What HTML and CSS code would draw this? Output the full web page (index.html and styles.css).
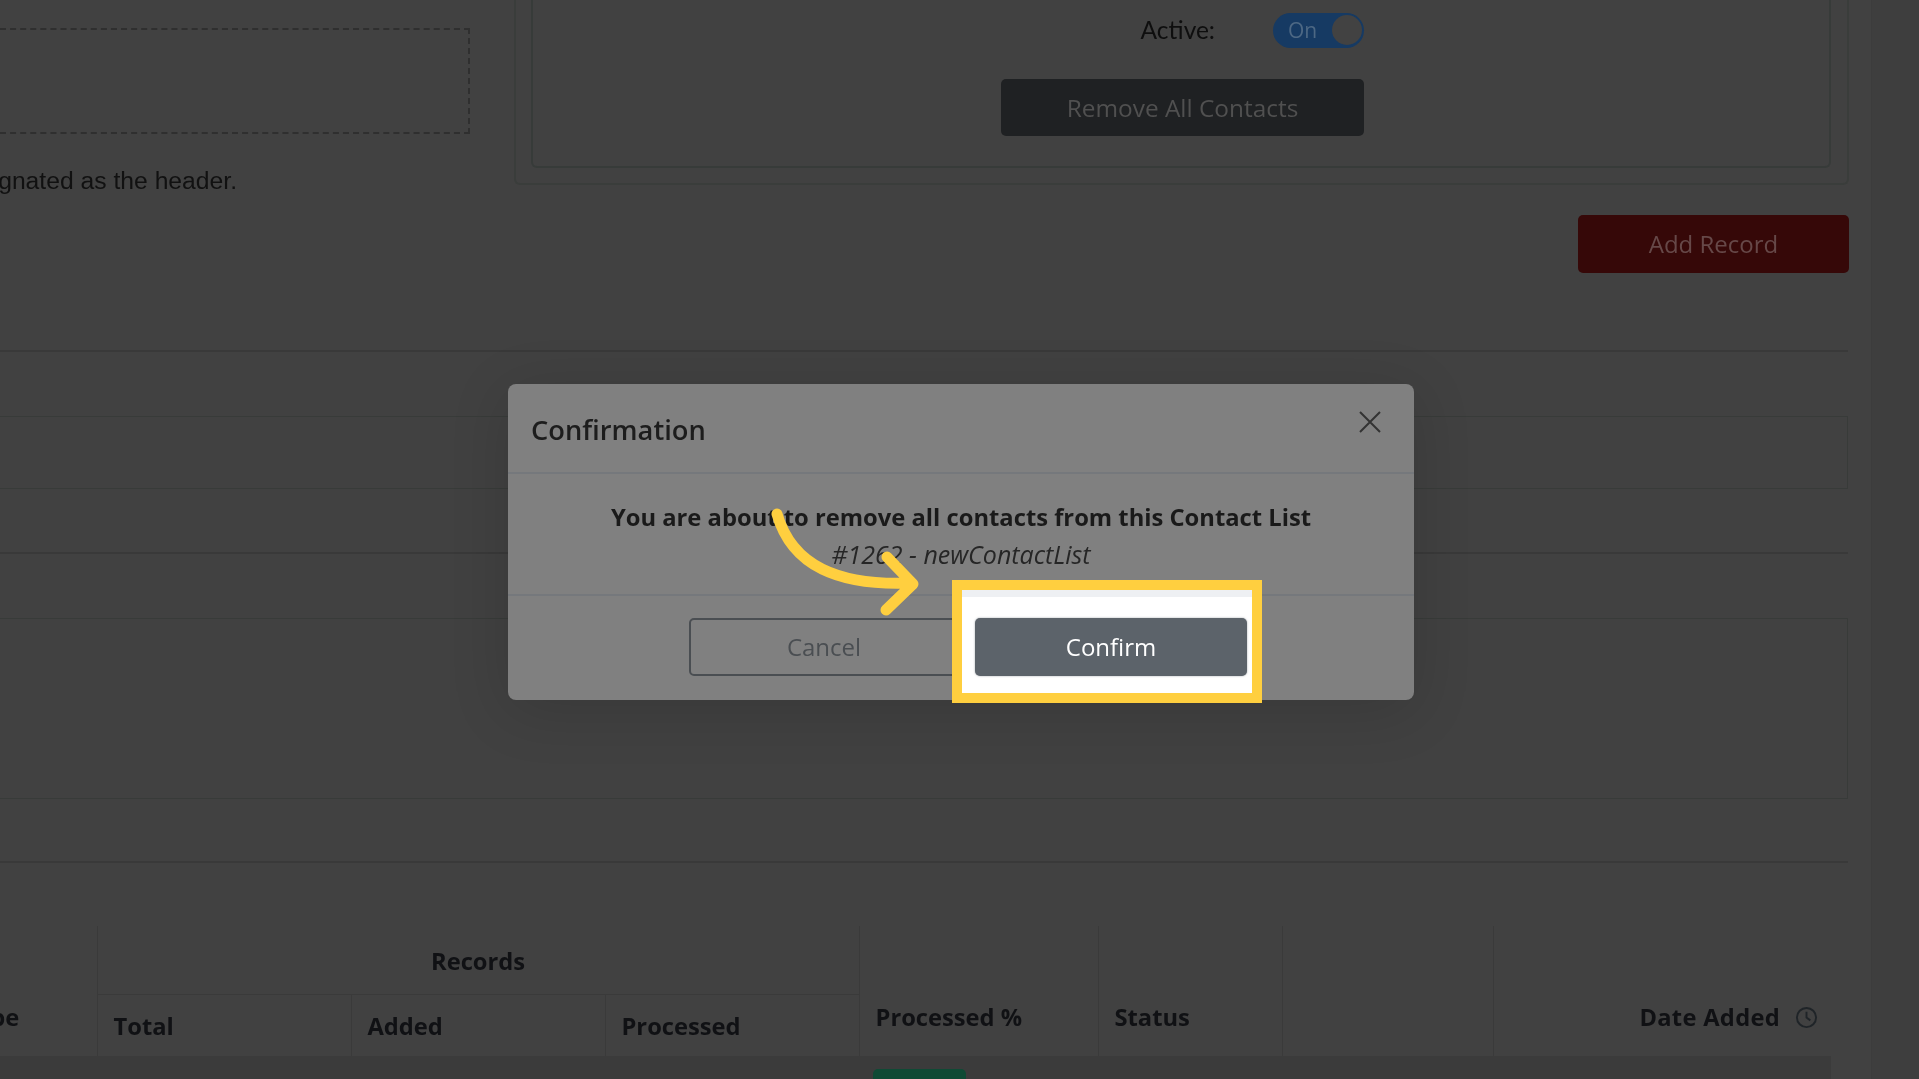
FILE: index.html
```html
<!DOCTYPE html>
<html lang="en">
<head>
<meta charset="utf-8">
<title>Contact List</title>
<link rel="stylesheet" href="styles.css">
</head>
<body>
<div class="shell">
  <main class="page">
    <section class="top-row">
      <div class="upload">
        <div class="dropzone"></div>
        <div class="note"><span>The first row will be designated as the header.</span></div>
      </div>
      <div class="outer-card">
        <div class="inner-card">
          <div class="controls">
            <div class="active-row">
              <span class="active-label">Active:</span>
              <span class="toggle"><span class="toggle-text">On</span><span class="knob"></span></span>
            </div>
            <button class="btn-remove">Remove All Contacts</button>
          </div>
        </div>
      </div>
    </section>
    <div class="actions"><button class="btn-add">Add Record</button></div>
    <hr class="rule rule-first">
    <div class="box box-short"></div>
    <hr class="rule rule-mid">
    <div class="box box-tall"></div>
    <hr class="rule rule-last">
    <table class="records">
      <colgroup>
        <col class="c-type"><col class="c-num"><col class="c-num"><col class="c-num">
        <col class="c-pct"><col class="c-status"><col class="c-blank"><col class="c-date">
      </colgroup>
      <thead>
        <tr class="head-one">
          <th rowspan="2" class="mid type">Type</th>
          <th colspan="3" class="center">Records</th>
          <th rowspan="2" class="mid">Processed %</th>
          <th rowspan="2" class="mid">Status</th>
          <th rowspan="2" class="mid"></th>
          <th rowspan="2" class="mid date"><span class="date-wrap"><span class="date-text">Date Added</span>
            <svg class="clock" viewBox="0 0 24 24" width="24" height="24" aria-hidden="true"><circle cx="12" cy="12" r="10"/><path d="M12 6v6l4 3"/></svg></span></th>
        </tr>
        <tr class="head-two"><th>Total</th><th>Added</th><th>Processed</th></tr>
      </thead>
      <tbody>
        <tr class="body-row">
          <td></td><td></td><td></td><td></td>
          <td><span class="badge"></span></td><td></td><td></td><td></td>
        </tr>
      </tbody>
    </table>
  </main>
  <div class="scrollbar"></div>
</div>

<div class="modal" role="dialog">
  <header class="modal-head">
    <h2>Confirmation</h2>
    <svg class="close" viewBox="0 0 24 24" width="24" height="24" aria-hidden="true"><path d="M2 2l20 20M22 2L2 22"/></svg>
  </header>
  <div class="modal-body">
    <p class="msg">You are about to remove all contacts from this Contact List</p>
    <p class="sub">#1262 - newContactList</p>
  </div>
  <footer class="modal-foot">
    <button class="btn-cancel">Cancel</button>
  </footer>
</div>

<div class="highlight">
  <div class="highlight-strip"></div>
  <button class="btn-confirm">Confirm</button>
</div>

<svg class="arrow" viewBox="0 0 1919 1079" width="1919" height="1079" aria-hidden="true">
  <path d="M777 514C792 566 838 586 911 583M887 557L913 584L886 610"/>
</svg>
</body>
</html>
```

FILE: styles.css
```css
* { box-sizing: border-box; }
html, body { margin: 0; height: 1079px; overflow: hidden; }
body {
  position: relative;
  width: 1919px;
  background: #414141;
  font-family: "Open Sans", "Noto Sans", sans-serif;
}
button { font-family: inherit; cursor: pointer; }

.shell { display: flex; height: 1079px; overflow: hidden; }
.page { width: 1848px; flex: none; filter: blur(0.6px); }
.scrollbar { margin-left: 23px; flex: 1; background: #3e3e3e; border-left: 1px solid #3c3c3c; }

/* top block */
.top-row { display: flex; height: 185px; margin-right: -1px; }
.upload { width: 514px; flex: none; padding-top: 28px; }
.dropzone {
  width: 470px; height: 106px;
  border: 2px dashed #2f2f2f; border-left: 0;
}
.note {
  width: 237px; margin-top: 32px;
  display: flex; justify-content: flex-end;
  overflow: hidden; white-space: nowrap;
  font: 24.7px/30px "Liberation Sans", Arial, sans-serif; color: #111;
}
.note span { flex: none; }
.outer-card {
  flex: 1; padding: 0 16px 15px 15px;
  border: 2px solid #3a3d3b; border-top: 0;
  border-radius: 0 0 6px 6px;
}
.inner-card {
  height: 100%; padding: 12px 0 0 468px;
  border: 2px solid #373b39; border-top: 0;
  border-radius: 0 0 6px 6px;
}
.controls { width: 363px; }
.active-row { display: flex; justify-content: flex-end; align-items: center; gap: 58px; height: 36px; }
.active-label { font: 24.5px/36px "Lato", sans-serif; color: #0e0e0e; }
.toggle {
  width: 91px; height: 35px; padding: 0 2px 0 15px;
  display: flex; align-items: center; justify-content: space-between;
  background: #163a63; border-radius: 18px;
}
.toggle-text { font: 21px/35px "Open Sans", sans-serif; color: #4d6884; }
.knob { width: 30px; height: 30px; border-radius: 50%; background: #424242; }
.btn-remove {
  display: block; width: 363px; height: 57px; margin-top: 31px;
  background: #1f2123; border: 0; border-radius: 5px;
  font-size: 24.4px; color: #505050;
}

.actions { display: flex; justify-content: flex-end; margin: 30px -1px 0 0; }
.btn-add {
  width: 271px; height: 58px; padding-bottom: 2px;
  background: #360808; border: 0; border-radius: 5px;
  font-size: 24px; color: #664848;
}

/* rules and boxes */
.rule { margin: 0; border: 0; height: 2px; background: #393939; }
.rule-first { margin-top: 77px; }
.box { border: 1px solid #383b39; border-left: 0; }
.box-short { height: 73px; margin-top: 64px; }
.rule-mid { margin-top: 63px; }
.box-tall { height: 181px; margin-top: 64px; }
.rule-last { margin-top: 62px; }

/* table */
.records {
  table-layout: fixed; width: 1888px; margin: 63px 0 0 -40px;
  border-collapse: collapse;
  color: #101114;
}
.c-type { width: 137px; }
.c-num { width: 254px; }
.c-pct { width: 239px; }
.c-status { width: 184px; }
.c-blank { width: 211px; }
.c-date { width: 355px; }
.records th {
  padding: 0 16px; text-align: left; font-size: 23.7px; font-weight: 700;
  border-left: 1px solid #3a3a3a;
}
.records th:first-child { border-left: 0; }
.head-one { height: 68px; }
.head-two { height: 62px; }
.head-two th { border-top: 1px solid #3a3a3a; border-left: 1px solid #3a3a3a; padding-top: 2px; }
.head-two th:first-child { border-left: 1px solid #3a3a3a; }
.records th.center { text-align: center; padding-top: 2px; }
.records th.mid { padding-top: 52px; }
.records th.type { padding-left: 3px; }
.records th.date { text-align: right; padding-right: 30px; }
.date-wrap { display: inline-flex; align-items: center; gap: 15px; }
.date-text { letter-spacing: 0.3px; }
.clock { fill: none; stroke: #1f2428; stroke-width: 2; width: 23px; height: 23px; }
.body-row { height: 40px; background: linear-gradient(90deg, #3b3b3b 1871px, #414141 1871px); }
.body-row td { padding: 13px 0 0 14px; vertical-align: top; }
.badge { display: block; width: 93px; height: 30px; background: #0f4a35; border-radius: 5px; }

/* modal */
.modal {
  position: absolute; left: 508px; top: 384px;
  width: 906px; height: 316px;
  background: #808080; border-radius: 8px;
  box-shadow: 0 10px 60px rgba(0,0,0,.14);
  filter: blur(0.5px);
  display: flex; flex-direction: column;
}
.modal-head {
  height: 90px; padding: 0 22px 0 23px; flex: none;
  display: flex; justify-content: space-between; align-items: flex-start;
  border-bottom: 2px solid #75787c;
}
.modal-head h2 { margin: 28px 0 0; font-size: 27.3px; line-height: 36px; font-weight: 600; color: #1d1d1d; }
.close { margin: 26px 10px 0 0; fill: none; stroke: #333; stroke-width: 2; }
.modal-body { height: 122px; flex: none; text-align: center; border-bottom: 2px solid #75787c; padding-top: 25px; }
.msg { margin: 0; font-size: 23.75px; line-height: 36px; font-weight: 700; color: #1a1a1a; }
.sub { margin: 1px 0 0; font-size: 25px; line-height: 36px; font-style: italic; color: #262626; }
.modal-foot { flex: 1; padding: 22px 0 0 181px; }
.btn-cancel {
  width: 270px; height: 58px; padding-bottom: 2px;
  background: transparent; border: 2px solid #4a4e52; border-radius: 5px;
  font-size: 24px; color: #4a4e52;
}

/* tutorial callout */
.highlight {
  position: absolute; left: 952px; top: 580px;
  width: 310px; height: 123px;
  background: #fff; border: 10px solid #ffcf3f;
}
.highlight-strip { height: 7px; background: #eef0f3; }
.btn-confirm {
  display: block; width: 272px; height: 58px; margin: 21px 0 0 13px; padding-bottom: 2px;
  background: #5c636a; border: 0; border-radius: 5px;
  box-shadow: 0 0 2px rgba(60,70,80,.5);
  font-size: 24px; font-weight: 500; color: #fff; filter: blur(0.3px);
}
.arrow { position: absolute; left: 0; top: 0; fill: none; stroke: #ffcf3f; stroke-width: 11; stroke-linecap: round; stroke-linejoin: round; pointer-events: none; }
```
